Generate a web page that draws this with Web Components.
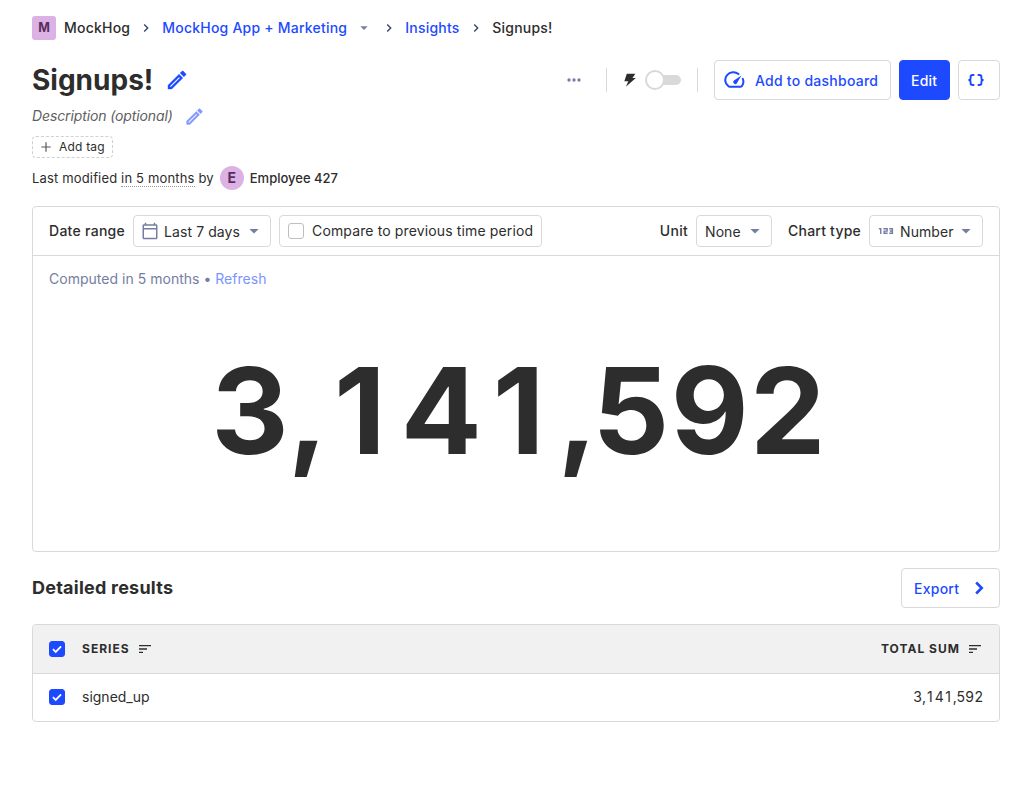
<!DOCTYPE html>
<html lang="en">
<head>
<meta charset="utf-8">
<title>Signups!</title>
<style>
body{margin:0;background:#fff;color:#2d2d2d;font:14px/20px Inter,"Liberation Sans",sans-serif}
</style>
</head>
<body>
<insight-page></insight-page>
<script>
const define = (name, css, html) => {
  const t = document.createElement('template');
  t.innerHTML = `<style>*{box-sizing:border-box}${css}</style>${html}`;
  customElements.define(name, class extends HTMLElement {
    constructor() {
      super();
      this.attachShadow({mode: 'open'}).append(t.content.cloneNode(true));
    }
  });
};

const ICONS = {
  edit: '<path fill="currentColor" stroke="currentColor" stroke-width=".4" d="M14.06 9.02l.92.92L5.92 19H5v-.92l9.06-9.06M17.66 3c-.25 0-.51.1-.7.29l-1.83 1.83 3.75 3.75 1.83-1.83c.39-.39.39-1.02 0-1.41l-2.34-2.34c-.2-.2-.45-.29-.71-.29zm-3.6 3.19L3 17.25V21h3.75L17.81 9.94l-3.75-3.75z"/>',
  chevron: '<path fill="currentColor" d="M8.59 16.59L13.17 12 8.59 7.41 10 6l6 6-6 6z"/>',
  chevronBold: '<path fill="none" stroke="currentColor" stroke-width="2.600" d="M9.200 6.500l5.500 5.500-5.500 5.500"/>',
  caret: '<path fill="currentColor" d="M6.500 9.500l5.500 5.500 5.500-5.500z"/>',
  dots: '<path fill="currentColor" d="M6 10a2 2 0 100 4 2 2 0 000-4zm12 0a2 2 0 100 4 2 2 0 000-4zm-6 0a2 2 0 100 4 2 2 0 000-4z"/>',
  plus: '<path fill="none" stroke="currentColor" stroke-width="2" d="M12 4v16M4 12h16"/>',
  bolt: '<path fill="currentColor" d="M7.200 2.600h12.800l-4.300 6.300h5L5.800 22l3.700-8.200H3.500z"/>',
  gauge: '<path fill="none" stroke="currentColor" stroke-width="2.200" stroke-linecap="round" d="M15.800 5.500A8.700 8.300 0 0 0 4.600 18.600q.4.700 1.200.700h12.600q.8 0 1.200-.700a8.700 8.300 0 0 0 .9-7.800"/><path fill="currentColor" d="M19 7.200l-4.800 8a2.200 2.200 0 1 1-3.400-2.700z"/>',
  braces: '<path fill="none" stroke="currentColor" stroke-width="2.300" d="M10 6H8Q5.500 6 5.500 8v1.800Q5.500 12 2.900 12q2.600 0 2.600 2.200V16Q5.500 18 8 18h2M14 6H16q2.500 0 2.500 2v1.800q0 2.200 2.600 2.200-2.600 0-2.600 2.200V16Q18.500 18 16 18h-2"/>',
  calendar: '<path fill="currentColor" d="M20 3h-1V1h-2v2H7V1H5v2H4c-1.100 0-2 .9-2 2v16c0 1.100.9 2 2 2h16c1.100 0 2-.9 2-2V5c0-1.100-.9-2-2-2zm0 18H4V10h16v11zm0-13H4V5h16v3z"/>',
  digits: '<path fill="none" stroke="currentColor" stroke-width="1.900" d="M2.500 9H5v7M8.500 9h5V12.200h-4V15h4.700M16.300 9h4.200v6h-4.200M17 12h3.500"/>',
  sort: '<path fill="currentColor" d="M3 18h6v-2H3v2zM3 6v2h18V6H3zm0 7h12v-2H3v2z"/>',
  check: '<path fill="none" stroke="currentColor" stroke-width="3" d="M5 12.200l4.800 4.800L19 7.500"/>'
};
customElements.define('ui-icon', class extends HTMLElement {
  connectedCallback() {
    if (this.shadowRoot) return;
    const s = this.getAttribute('size') || 24;
    this.attachShadow({mode: 'open'}).innerHTML =
      `<style>:host{display:block;flex:none;width:${s}px;height:${s}px}svg{display:block}</style>
       <svg width="${s}" height="${s}" viewBox="0 0 24 24">${ICONS[this.getAttribute('name')]}</svg>`;
  }
});

define('ui-button', `
  :host{display:flex;align-items:center;height:40px;padding:2px 12px 0;border:1px solid #d9d9d9;border-radius:4px;color:#1d4aff;font-weight:500;letter-spacing:.25px;flex:none;white-space:nowrap}
  :host([primary]){background:#1d4aff;border-color:#1d4aff;color:#fff}
  ::slotted(ui-icon){margin-top:-2px}`, '<slot></slot>');

define('ui-select', `
  :host{display:flex;align-items:center;height:32px;padding:0 8px;border:1px solid #d9d9d9;border-radius:4px;flex:none;white-space:nowrap;letter-spacing:.08px}
  span{padding-top:2px}
  .arrow{color:#747ea2;margin-left:auto;margin-right:-2px}
  ::slotted(ui-icon){color:#747ea2}`,
  '<slot name="icon"></slot><span><slot></slot></span><ui-icon class="arrow" name="caret" size="20"></ui-icon>');

define('ui-checkbox', `
  :host{display:grid;place-items:center;flex:none;width:16px;height:16px;border:1px solid #bfbfbf;border-radius:3px;color:#fff}
  :host([checked]){background:#1d4aff;border-color:#1d4aff}
  ui-icon{display:none}
  :host([checked]) ui-icon{display:block}`, '<ui-icon name="check" size="14"></ui-icon>');

define('ui-avatar', `
  :host{display:grid;place-items:center;flex:none;width:24px;height:24px;border-radius:50%;background:#dcb1e3;color:#572e5e;font-weight:700;font-size:14px}
  :host([square]){border-radius:3px;font-size:12.500px;letter-spacing:0}`, '<slot></slot>');

define('ui-toggle', `
  :host{display:grid;align-items:center;width:36px;height:20px;flex:none}
  i,b{grid-area:1/1}
  i{height:10px;margin-left:9px;border-radius:5px;background:#d9d9d9}
  b{width:20px;height:20px;border:2px solid #d9d9d9;border-radius:50%;background:#fff}`, '<i></i><b></b>');

define('total-figure', `
  :host{white-space:nowrap}
  span{letter-spacing:calc(var(--gap) + var(--track,0px))}
  .a{--gap:-.008em}.b{--gap:.05em}.c{--gap:.125em}.g{--gap:.092em}.d{--gap:.108em}.e{--gap:-.042em}.f{--gap:.012em}`,
  '<span class="a">3</span><span class="b">,</span><span class="c">1</span><span class="g">4</span><span class="d">1</span><span class="e">,</span><span class="f">59</span>2');

define('crumb-trail', `
  :host{display:flex;align-items:center;height:24px;font-weight:500;letter-spacing:.22px;white-space:nowrap}
  .name{margin-left:8px}
  a{color:#1d4aff}
  .sep{color:#35416b;margin:0 8px}
  .arrow{color:#747ea2;margin-left:9px;margin-right:1px}`, `
  <ui-avatar square>M</ui-avatar><span class="name">MockHog</span><ui-icon class="sep" name="chevron" size="16"></ui-icon>
  <a>MockHog App + Marketing</a><ui-icon class="arrow" name="caret" size="16"></ui-icon><ui-icon class="sep" name="chevron" size="16"></ui-icon>
  <a style="width:55px">Insights</a><ui-icon class="sep" name="chevron" size="16"></ui-icon><span>Signups!</span>`);

define('insight-header', `
  :host{display:block;margin-top:20px}
  .row{display:flex;align-items:center;height:40px}
  h1{margin:0;font-size:28px;line-height:40px;font-weight:700}
  .pen{margin-left:12px;color:#1d4aff}
  .spacer{flex:1}
  .dots{color:#747ea2}
  .rule{width:1px;height:24px;background:#d9d9d9}
  .desc{display:flex;align-items:center;height:24px;margin-top:4px;font-style:italic;color:#606060;letter-spacing:-.12px}
  .desc ui-icon{margin-left:11px;color:#8098ff}
  .tag{display:flex;align-items:center;width:81px;height:22px;margin-top:8px;padding-left:6px;border:1px dashed #d0d0d0;border-radius:4px;font-size:12px;gap:6px;letter-spacing:.2px;white-space:nowrap}
  .tag ui-icon{color:#555}
  .modified{display:flex;align-items:center;height:24px;margin-top:8px;font-size:13px;letter-spacing:.16px;white-space:pre}
  u{text-decoration:none;border-bottom:1px dotted #999;line-height:15px;margin-top:1px}
  .modified ui-avatar{margin:0 6px;letter-spacing:0}
  .who{font-weight:500;letter-spacing:0}`, `
  <div class="row"><h1>Signups!</h1><ui-icon class="pen" name="edit"></ui-icon><span class="spacer"></span>
    <ui-icon class="dots" name="dots" size="20"></ui-icon><i class="rule" style="margin:0 15px 0 22px"></i>
    <ui-icon name="bolt" size="16"></ui-icon><ui-toggle style="margin:0 16px 0 7px"></ui-toggle><i class="rule" style="margin-right:16px"></i>
    <ui-button style="width:177px;padding-left:9px"><ui-icon name="gauge" size="22" style="margin-right:9px"></ui-icon>Add to dashboard</ui-button>
    <ui-button primary style="margin:0 8px;width:51px;padding-left:11px">Edit</ui-button>
    <ui-button style="width:42px;padding-left:7px"><ui-icon name="braces" size="20"></ui-icon></ui-button></div>
  <div class="desc">Description (optional)<ui-icon name="edit" size="21"></ui-icon></div>
  <div class="tag"><ui-icon name="plus" size="14"></ui-icon>Add tag</div>
  <div class="modified">Last modified <u>in 5 months</u> by<ui-avatar>E</ui-avatar><span class="who">Employee 427</span></div>`);

define('insight-panel', `
  :host{display:flex;flex-direction:column;height:346px;margin-top:16px;border:1px solid #d9d9d9;border-radius:4px}
  .bar{display:flex;align-items:center;height:49px;padding:0 16px;border-bottom:1px solid #d9d9d9;white-space:nowrap}
  .label{font-weight:500;letter-spacing:.28px;margin-right:8px}
  .compare{display:flex;align-items:center;gap:8px;width:263px;height:32px;padding-left:8px;margin-left:8px;border:1px solid #d9d9d9;border-radius:4px;letter-spacing:.13px}
  .spacer{flex:1}
  .status{margin:13px 16px 0;color:#747ea2;letter-spacing:.02px}
  a{color:#7a94ff}
  .number{flex:1;text-align:center;font-size:120px;font-weight:700;line-height:120px;padding:62px 0 0 5px}`, `
  <div class="bar"><span class="label">Date range</span>
    <ui-select style="width:138px"><ui-icon slot="icon" name="calendar" size="18" style="margin:0 5px 0 -1px"></ui-icon>Last 7 days</ui-select>
    <div class="compare"><ui-checkbox></ui-checkbox>Compare to previous time period</div><span class="spacer"></span>
    <span class="label">Unit</span><ui-select style="width:76px;margin-right:16px">None</ui-select>
    <span class="label" style="width:73px;letter-spacing:.22px">Chart type</span><ui-select style="width:114px"><ui-icon slot="icon" name="digits" size="18" style="margin:0 5px 0 -1px"></ui-icon>Number</ui-select></div>
  <div class="status">Computed in 5 months • <a>Refresh</a></div>
  <div class="number"><total-figure></total-figure></div>`);

define('results-table', `
  :host{display:block;margin-top:16px}
  header{display:flex;align-items:center;justify-content:space-between;height:40px}
  h2{margin:0;font-size:18px;line-height:24px;font-weight:700;letter-spacing:.23px}
  .table{height:98px;margin-top:16px;border:1px solid #d9d9d9;border-radius:4px;overflow:hidden}
  .tr{display:flex;align-items:center;height:46px;padding:0 16px}
  .th{height:49px;background:#f1f1f1;border-bottom:1px solid #d9d9d9;font-size:12px;font-weight:700;letter-spacing:1.030px}
  ui-checkbox{margin-right:17px}
  .tr>ui-icon{margin-left:7px}
  .spacer{flex:1}
  total-figure{--track:.25px}`, `
  <header><h2>Detailed results</h2><ui-button style="width:99px">Export<ui-icon name="chevronBold" style="margin-left:8px"></ui-icon></ui-button></header>
  <div class="table">
    <div class="tr th"><ui-checkbox checked></ui-checkbox>SERIES<ui-icon name="sort" size="16"></ui-icon><span class="spacer"></span>TOTAL SUM<ui-icon name="sort" size="16"></ui-icon></div>
    <div class="tr"><ui-checkbox checked></ui-checkbox>signed_up<span class="spacer"></span><total-figure></total-figure></div>
  </div>`);

define('insight-page', ':host{display:block;padding:16px 32px}',
  '<crumb-trail></crumb-trail><insight-header></insight-header><insight-panel></insight-panel><results-table></results-table>');
</script>
</body>
</html>
